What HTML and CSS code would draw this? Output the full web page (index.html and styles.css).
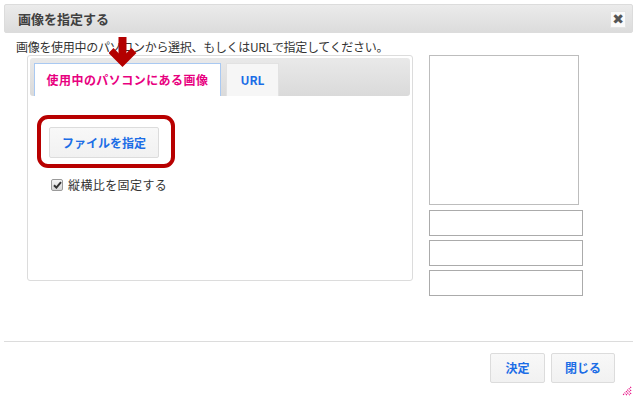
FILE: index.html
```html
<!DOCTYPE html>
<html lang="ja">
<head>
<meta charset="utf-8">
<title>画像を指定する</title>
<link rel="stylesheet" href="styles.css">
</head>
<body>
<div class="dialog">
  <div class="titlebar">
    <span class="title">画像を指定する</span>
    <button class="close" type="button">✖</button>
  </div>
  <div class="body">
    <p class="lead">画像を使用中のパソコンから選択、もしくはURLで指定してください。</p>
    <div class="main">
      <div class="tabs">
        <div class="tabbar">
          <span class="tab active">使用中のパソコンにある画像</span>
          <span class="tab">URL</span>
        </div>
        <div class="tabpane">
          <div class="file-wrap">
            <button class="btn file-btn" type="button">ファイルを指定</button>
            <span class="highlight"></span>
          </div>
          <label class="check">
            <span class="checkbox"><svg width="9" height="8" viewBox="0 0 9 8"><path d="M1 4.2 L3.4 6.6 L8 1.2" fill="none" stroke="#333" stroke-width="2"/></svg></span>
            <span class="check-label">縦横比を固定する</span>
          </label>
        </div>
      </div>
      <div class="side">
        <div class="preview"></div>
        <input class="field" type="text">
        <input class="field" type="text">
        <input class="field" type="text">
      </div>
    </div>
  </div>
  <div class="footer">
    <button class="btn foot-btn" type="button">決定</button>
    <button class="btn foot-btn" type="button">閉じる</button>
  </div>
  <svg class="arrow" width="28" height="34" viewBox="0 0 28 34">
    <path d="M13.5 0 V24" stroke="#b30000" stroke-width="8" fill="none"/>
    <path d="M4.5 16 L13.5 25 L22.5 16" stroke="#b30000" stroke-width="7" fill="none" stroke-linecap="square"/>
  </svg>
  <svg class="grip" width="10" height="10" viewBox="0 0 10 10">
    <path d="M9 1 L1 9 M9 4 L4 9 M9 7 L7 9" stroke="#e6007e" stroke-width="1.4" stroke-dasharray="1 1" fill="none"/>
  </svg>
</div>
</body>
</html>
```
FILE: styles.css
```css
* { box-sizing: border-box; }

html, body {
  margin: 0;
  padding: 0;
  background: #fff;
}

body {
  font-family: "Noto Sans CJK JP", "Noto Sans", sans-serif;
  color: #333;
  font-size: 12px;
}

.dialog {
  position: relative;
  width: 629px;
  height: 392px;
  margin: 4px 0 0 4px;
  background: #fff;
}

.titlebar {
  display: flex;
  align-items: center;
  justify-content: space-between;
  height: 29px;
  padding: 0 6px 0 13px;
  background: linear-gradient(#ebebeb, #dcdcdc);
  border: 1px solid #dcdcdc;
  border-radius: 2px;
}

.title {
  font-size: 13px;
  font-weight: bold;
  color: #404040;
  line-height: 16px;
}

.close {
  width: 16px;
  height: 17px;
  padding: 0;
  border: 1px solid #e4e4e4;
  background: #fafafa;
  color: #555;
  font-size: 14px;
  line-height: 15px;
  font-family: "DejaVu Sans", sans-serif;
  margin-top: 1px;
  display: flex;
  align-items: center;
  justify-content: center;
}

.body {
  height: 308px;
  padding: 5px 0 0 12px;
}

.lead {
  margin: 0;
  line-height: 17px;
  font-size: 12px;
  color: #333;
  letter-spacing: -0.3px;
}

.main {
  display: flex;
  align-items: flex-start;
  margin-left: 11px;
}

.tabs {
  width: 386px;
  height: 226px;
  border: 1px solid #dcdcdc;
  border-radius: 3px;
  padding: 2px;
}

.tabbar {
  display: flex;
  align-items: flex-end;
  gap: 5px;
  height: 38px;
  padding: 0 4px;
  background: linear-gradient(#e9e9e9, #dadada);
  border-radius: 3px;
}

.tab {
  height: 33px;
  display: flex;
  align-items: center;
  justify-content: center;
  font-weight: bold;
  font-size: 12px;
  line-height: 16px;
  border: 1px solid #e2e2e2;
  border-bottom: none;
  background: #f6f6f6;
  color: #1b6de6;
  width: 53px;
}

.tab.active {
  width: 187px;
  background: #fff;
  color: #e8007f;
  border: 1px solid #a9c9f2;
  border-bottom: none;
  letter-spacing: 0.45px;
}

.tabpane {
  padding: 31px 0 0 19px;
}

.file-wrap {
  position: relative;
  display: inline-block;
}

.btn {
  font-family: "Noto Sans CJK JP", "Noto Sans", sans-serif;
  font-weight: bold;
  font-size: 12px;
  color: #1b6de6;
  background: linear-gradient(#f8f8f8, #f1f1f1);
  border: 1px solid #dcdcdc;
  border-radius: 2px;
  padding: 0;
  line-height: 16px;
}

.file-btn {
  display: block;
  width: 110px;
  height: 31px;
}

.highlight {
  position: absolute;
  left: -12px;
  top: -12px;
  width: 138px;
  height: 53px;
  border: 4px solid #b80000;
  border-radius: 11px;
}

.check {
  display: flex;
  align-items: center;
  margin: 20px 0 0 2px;
  gap: 5px;
}

.checkbox {
  width: 12px;
  height: 12px;
  border: 1px solid #9a9a9a;
  border-radius: 2px;
  background: linear-gradient(#f4f4f4, #d6d6d6);
  display: flex;
  align-items: center;
  justify-content: center;
}

.check-label {
  font-size: 12px;
  line-height: 14px;
  color: #333;
  letter-spacing: 0.4px;
}

.side {
  display: flex;
  flex-direction: column;
  gap: 4px;
  margin-left: 16px;
}

.preview {
  width: 150px;
  height: 150px;
  border: 1px solid #bdbdbd;
  margin-bottom: 1px;
}

.field {
  width: 154px;
  height: 26px;
  border: 1px solid #ababab;
  margin: 0;
  padding: 0;
  background: #fff;
}

.footer {
  border-top: 1px solid #dcdcdc;
  display: flex;
  justify-content: flex-end;
  gap: 6px;
  padding: 11px 18px 0 0;
}

.foot-btn {
  height: 30px;
  width: 55px;
}

.foot-btn + .foot-btn {
  width: 64px;
}

.arrow {
  position: absolute;
  left: 105px;
  top: 33px;
}

.grip {
  position: absolute;
  right: 1px;
  bottom: 0;
}
```
